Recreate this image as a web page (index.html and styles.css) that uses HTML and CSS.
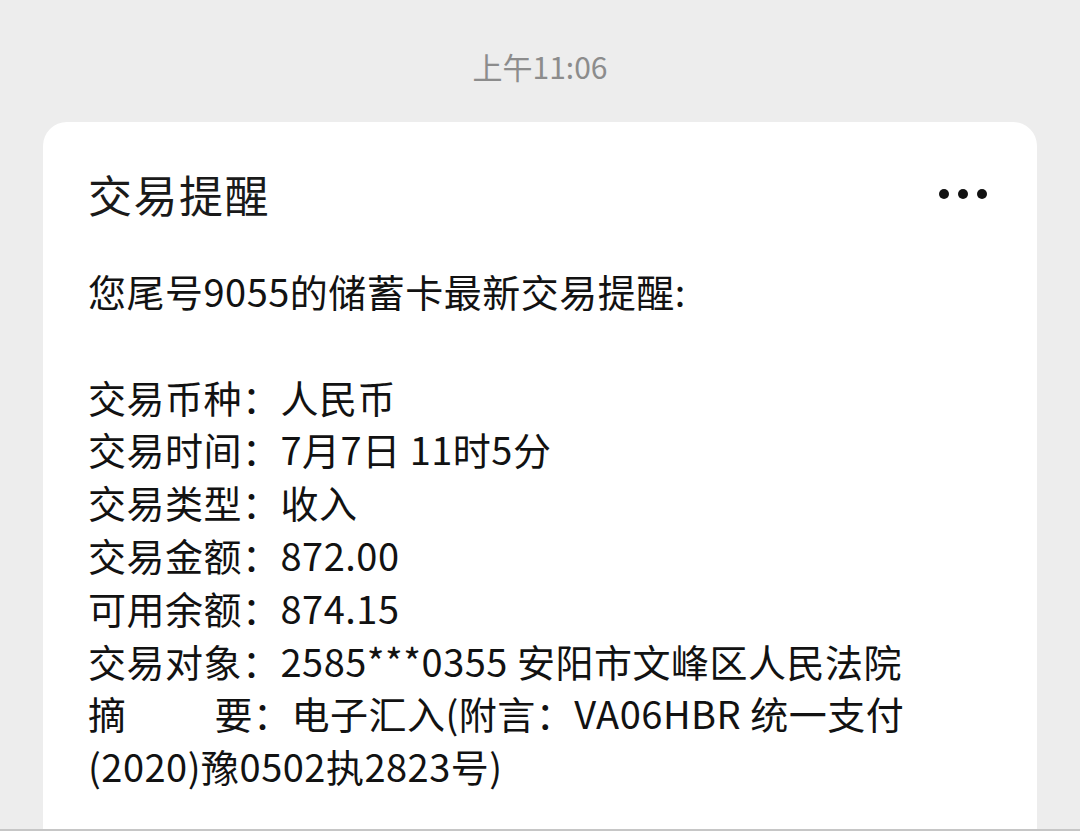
FILE: index.html
```html
<!DOCTYPE html>
<html lang="zh-CN">
<head>
<meta charset="utf-8">
<link rel="stylesheet" href="styles.css">
</head>
<body>
<div class="time">上午11:06</div>
<div class="card">
  <div class="card-head">
    <div class="title">交易提醒</div>
    <div class="more"><span></span><span></span><span></span></div>
  </div>
  <div class="content">
    <p class="line">您尾号9055的储蓄卡最新交易提醒:</p>
    <p class="line blank">&nbsp;</p>
    <p class="line">交易币种：人民币</p>
    <p class="line">交易时间：7月7日 11时5分</p>
    <p class="line">交易类型：收入</p>
    <p class="line">交易金额：872.00</p>
    <p class="line">可用余额：874.15</p>
    <p class="line">交易对象：2585***0355 安阳市文峰区人民法院</p>
    <p class="line"><span class="label">摘要</span>：电子汇入(附言：VA06HBR 统一支付(2020)豫0502执2823号)</p>
  </div>
</div>
<div class="bottom-line"></div>
</body>
</html>
```

FILE: styles.css
```css
html, body {
  margin: 0;
  padding: 0;
}
body {
  width: 1080px;
  height: 831px;
  overflow: hidden;
  background: #ededed;
  font-family: "Noto Sans CJK SC", "Noto Sans", sans-serif;
  position: relative;
}
.time {
  text-align: center;
  color: #8c8c8c;
  font-size: 30px;
  line-height: 40px;
  padding-top: 46px;
  height: 76px;
}
.card {
  margin: 0 43px;
  background: #ffffff;
  border-radius: 24px;
  padding: 46px 45px 0 45px;
  height: 700px;
}
.card-head {
  display: flex;
  justify-content: space-between;
  align-items: center;
  height: 52px;
}
.title {
  font-size: 44px;
  line-height: 52px;
  color: #1a1a1a;
  letter-spacing: 1.5px;
}
.more {
  display: flex;
  gap: 9px;
  margin-right: 5px;
}
.more span {
  width: 10px;
  height: 10px;
  border-radius: 50%;
  background: #111;
}
.content {
  margin-top: 45px;
  color: #121212;
  font-size: 38px;
  line-height: 52.8px;
  letter-spacing: 0.5px;
}
.line {
  margin: 0;
}
.label {
  display: inline-block;
  width: 165px;
  text-align: justify;
  text-align-last: justify;
}
.bottom-line {
  position: absolute;
  left: 0;
  right: 0;
  bottom: 0;
  height: 2px;
  background: #c6c6c6;
}
```
